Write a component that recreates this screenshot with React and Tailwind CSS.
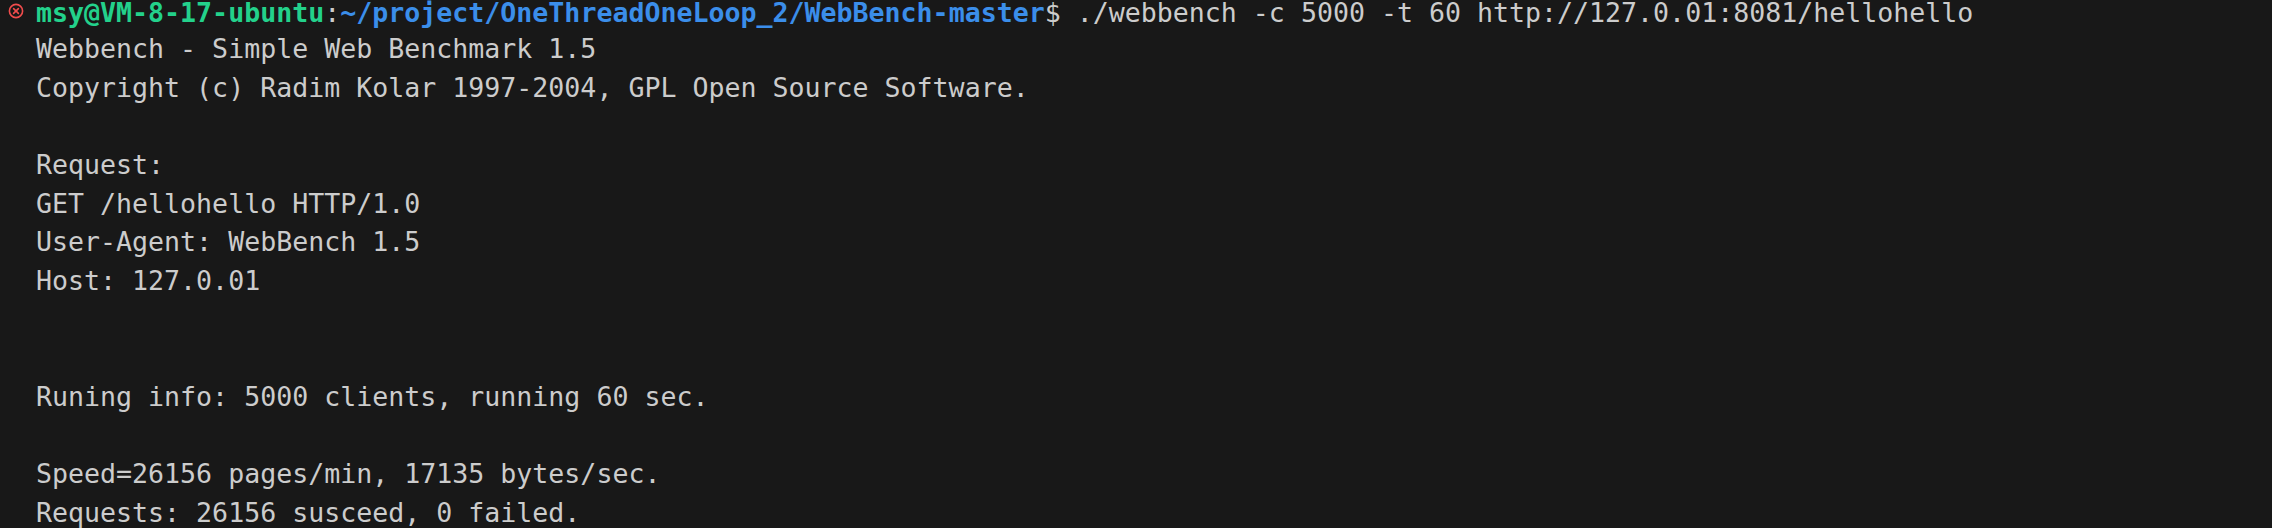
export default function App() {
  const lines = [
    "Webbench - Simple Web Benchmark 1.5",
    "Copyright (c) Radim Kolar 1997-2004, GPL Open Source Software.",
    "",
    "Request:",
    "GET /hellohello HTTP/1.0",
    "User-Agent: WebBench 1.5",
    "Host: 127.0.01",
    "",
    "",
    "Runing info: 5000 clients, running 60 sec.",
    "",
    "Speed=26156 pages/min, 17135 bytes/sec.",
    "Requests: 26156 susceed, 0 failed.",
  ];
  return (
    <div className="w-[2272px] h-[528px] bg-[#181818] overflow-hidden">
      <div
        className="flex text-[26.6px] leading-[38.67px] text-[#cccccc] whitespace-pre"
        style={{ fontFamily: '"DejaVu Sans Mono", "Liberation Mono", monospace' }}
      >
        <div className="w-[36px] shrink-0 flex flex-col">
          <div className="h-[30.17px] flex items-start pl-[8px] pt-[3px]">
            <svg
              width="16"
              height="16"
              viewBox="0 0 16 16"
              fill="none"
              stroke="#f14c4c"
              strokeWidth="1.6"
              strokeLinecap="round"
            >
              <circle cx="8" cy="8" r="6.6" />
              <path d="M5.6 5.6 L10.4 10.4 M10.4 5.6 L5.6 10.4" />
            </svg>
          </div>
        </div>
        <div className="flex flex-col">
          <div className="h-[30.17px] leading-[22px] pt-[2px]">
            <span className="font-bold text-[#23d18b]">msy@VM-8-17-ubuntu</span>
            <span>:</span>
            <span className="font-bold text-[#3b8eea]">~/project/OneThreadOneLoop_2/WebBench-master</span>
            <span>$ ./webbench -c 5000 -t 60 http://127.0.01:8081/hellohello</span>
          </div>
          {lines.map((l, i) => (
            <div key={i} className="h-[38.67px]">
              {l === "" ? "\u00a0" : l}
            </div>
          ))}
        </div>
      </div>
    </div>
  );
}
